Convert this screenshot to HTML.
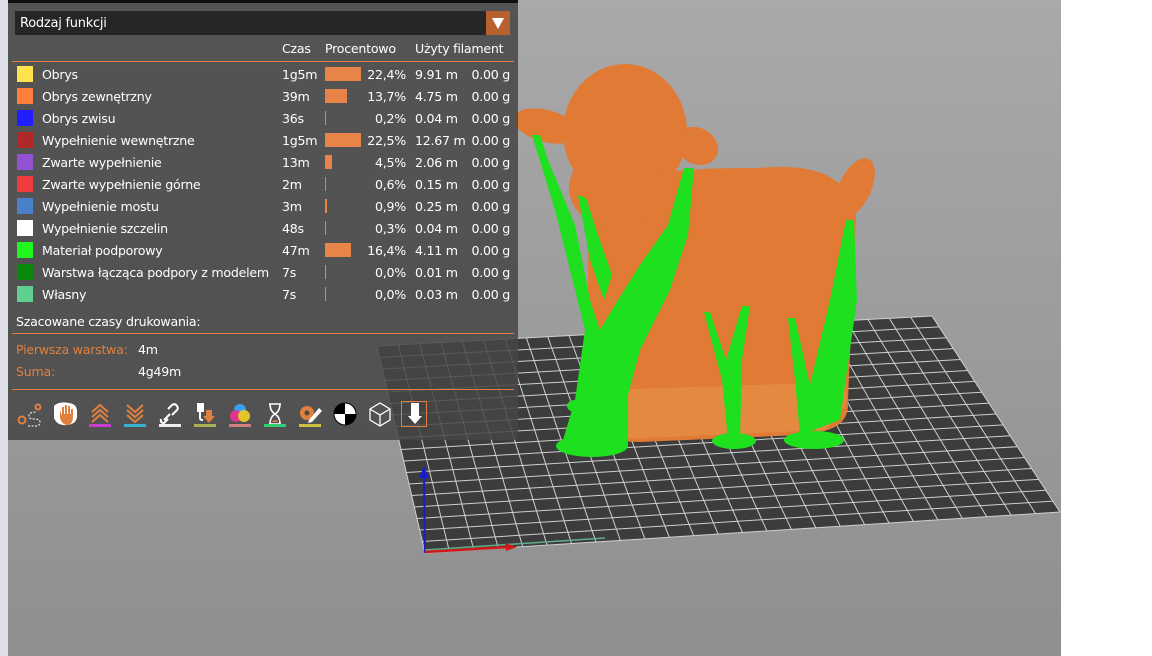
<!DOCTYPE html>
<html><head><meta charset="utf-8">
<style>
html,body{margin:0;padding:0}
body{width:1152px;height:656px;position:relative;overflow:hidden;background:#fff;font-family:"DejaVu Sans","Liberation Sans",sans-serif;}
#left{position:absolute;left:0;top:0;width:8px;height:656px;background:#dde0e6;}
#vp{position:absolute;left:8px;top:0;width:1053px;height:656px;background:linear-gradient(#a9a9a9,#8f8f8f);}
#scene{position:absolute;left:0;top:0;}
#panel{position:absolute;left:8px;top:0;width:510px;height:440px;background:rgba(70,70,70,0.86);color:#fff;font-size:12.6px;letter-spacing:-0.25px;}
#topbar{position:absolute;left:0;top:0;width:510px;height:3px;background:#111;}
.t{position:absolute;white-space:nowrap;line-height:15px;}
.sw{position:absolute;width:16px;height:16px;left:9px;}
.bar{position:absolute;height:14px;background:#e8844a;left:317px;}
.r{text-align:right;}
.hr{position:absolute;left:0;width:510px;height:1px;background:#e0803f;}
.or{color:#e0803f;}
.ic{position:absolute;top:400px;width:28px;height:28px;}
.ul{position:absolute;top:424px;width:22px;height:3px;}
</style></head><body>
<div id="left"></div>
<div id="vp"></div>
<svg id="scene" width="1152" height="656" viewBox="0 0 1152 656">
  <polygon points="377,346 932,316 1060,512 425,553" fill="#3c3c3c"/>
  <g id="grid" stroke="#cfcfcf" stroke-width="1"></g>
  <line x1="424" y1="470" x2="425" y2="553" stroke="#1a1ad0" stroke-width="2"/>
  <polygon points="419,478 424,466 429,478" fill="#1a1ad0"/>
  <line x1="425" y1="550" x2="605" y2="538" stroke="#5fb08a" stroke-width="1.5"/>
  <line x1="425" y1="552" x2="510" y2="547" stroke="#d01a1a" stroke-width="2.5"/>
  <polygon points="505,543 517,547 506,551" fill="#d01a1a"/>
  <g fill="#e07a35">
    <path d="M588,205 C620,168 700,168 760,168 C820,162 850,180 856,215 L848,400 C850,425 832,432 800,435 L640,442 L590,440 L588,330 Z"/>
    <ellipse cx="855" cy="188" rx="16" ry="32" transform="rotate(25 855 188)"/>
    <ellipse cx="625" cy="132" rx="62" ry="68"/>
    <ellipse cx="615" cy="188" rx="46" ry="40"/>
    <ellipse cx="546" cy="126" rx="33" ry="16" transform="rotate(15 546 126)"/>
    <ellipse cx="697" cy="146" rx="22" ry="18" transform="rotate(30 697 146)"/>
  </g>
  <path d="M600,390 L845,382 L846,405 L825,430 L600,440 Z" fill="#e69248" opacity="0.6"/>
  <g fill="#1ee01e">
    <path d="M532,135 L540,135 L548,160 L575,225 L590,300 L600,330 L618,300 L640,265 L668,225 L684,168 L694,168 L688,235 L670,290 L640,350 L628,395 L628,445 L560,450 L575,400 L585,330 L570,270 L555,210 Z"/>
    <path d="M578,195 L586,198 L598,235 L612,275 L604,300 L590,260 Z"/>
    <ellipse cx="592" cy="446" rx="36" ry="11"/>
    <path d="M704,312 L710,312 L726,360 L742,306 L750,306 L742,360 L740,440 L728,440 L722,380 Z"/>
    <ellipse cx="734" cy="441" rx="22" ry="8"/>
    <path d="M788,318 L795,318 L810,385 L830,300 L846,220 L854,220 L857,300 L840,420 L800,435 L795,380 Z"/>
    <ellipse cx="814" cy="440" rx="30" ry="9"/>
    <ellipse cx="575" cy="406" rx="8" ry="6"/>
  </g>
</svg>
<script>
(function(){
 var A=[377,346],B=[932,316],C=[1060,512],D=[425,553];
 var g=document.getElementById('grid'),s='';
 function L(p,q,t){return [p[0]+(q[0]-p[0])*t,p[1]+(q[1]-p[1])*t];}
 var N=26,M=18;
 for(var i=0;i<=N;i++){var t=i/N,p=L(A,B,t),q=L(D,C,t);s+='<line x1="'+p[0]+'" y1="'+p[1]+'" x2="'+q[0]+'" y2="'+q[1]+'"/>';}
 for(var j=0;j<=M;j++){var u=j/M,p=L(A,D,u),q=L(B,C,u);s+='<line x1="'+p[0]+'" y1="'+p[1]+'" x2="'+q[0]+'" y2="'+q[1]+'"/>';}
 g.innerHTML=s;
})();
</script>
<div id="panel">
 <div id="topbar"></div>
 <div style="position:absolute;left:7px;top:11px;width:495px;height:24px;background:#262626;"></div>
 <div class="t" style="left:12px;top:16px;font-size:13px;">Rodzaj funkcji</div>
 <div style="position:absolute;left:478px;top:11px;width:24px;height:24px;background:#b8612f;"></div>
 <svg style="position:absolute;left:482px;top:15px" width="16" height="16"><polygon points="2,3 14,3 8,14" fill="#fff"/></svg>
 <div class="t" style="left:274px;top:41px;">Czas</div>
 <div class="t" style="left:317px;top:41px;">Procentowo</div>
 <div class="t" style="left:407px;top:41px;">Użyty filament</div>
 <div class="hr" style="top:61px;left:4px;width:502px"></div>

 <div class="sw" style="top:66px;background:#ffe24a"></div><div class="t" style="left:34px;top:67px">Obrys</div><div class="t" style="left:274px;top:67px">1g5m</div><div class="bar" style="top:67px;width:36px"></div><div class="t r" style="left:340px;width:58px;top:67px">22,4%</div><div class="t" style="left:407px;top:67px">9.91 m</div><div class="t r" style="left:440px;width:62px;top:67px">0.00 g</div>
 <div class="sw" style="top:88px;background:#ff7f3b"></div><div class="t" style="left:34px;top:89px">Obrys zewnętrzny</div><div class="t" style="left:274px;top:89px">39m</div><div class="bar" style="top:89px;width:22px"></div><div class="t r" style="left:340px;width:58px;top:89px">13,7%</div><div class="t" style="left:407px;top:89px">4.75 m</div><div class="t r" style="left:440px;width:62px;top:89px">0.00 g</div>
 <div class="sw" style="top:110px;background:#1f1fff"></div><div class="t" style="left:34px;top:111px">Obrys zwisu</div><div class="t" style="left:274px;top:111px">36s</div><div class="bar" style="top:111px;width:1px"></div><div class="t r" style="left:340px;width:58px;top:111px">0,2%</div><div class="t" style="left:407px;top:111px">0.04 m</div><div class="t r" style="left:440px;width:62px;top:111px">0.00 g</div>
 <div class="sw" style="top:132px;background:#b0282a"></div><div class="t" style="left:34px;top:133px">Wypełnienie wewnętrzne</div><div class="t" style="left:274px;top:133px">1g5m</div><div class="bar" style="top:133px;width:36px"></div><div class="t r" style="left:340px;width:58px;top:133px">22,5%</div><div class="t" style="left:407px;top:133px">12.67 m</div><div class="t r" style="left:440px;width:62px;top:133px">0.00 g</div>
 <div class="sw" style="top:154px;background:#9551d4"></div><div class="t" style="left:34px;top:155px">Zwarte wypełnienie</div><div class="t" style="left:274px;top:155px">13m</div><div class="bar" style="top:155px;width:7px"></div><div class="t r" style="left:340px;width:58px;top:155px">4,5%</div><div class="t" style="left:407px;top:155px">2.06 m</div><div class="t r" style="left:440px;width:62px;top:155px">0.00 g</div>
 <div class="sw" style="top:176px;background:#f03c3c"></div><div class="t" style="left:34px;top:177px">Zwarte wypełnienie górne</div><div class="t" style="left:274px;top:177px">2m</div><div class="bar" style="top:177px;width:1px"></div><div class="t r" style="left:340px;width:58px;top:177px">0,6%</div><div class="t" style="left:407px;top:177px">0.15 m</div><div class="t r" style="left:440px;width:62px;top:177px">0.00 g</div>
 <div class="sw" style="top:198px;background:#4a80c8"></div><div class="t" style="left:34px;top:199px">Wypełnienie mostu</div><div class="t" style="left:274px;top:199px">3m</div><div class="bar" style="top:199px;width:2px"></div><div class="t r" style="left:340px;width:58px;top:199px">0,9%</div><div class="t" style="left:407px;top:199px">0.25 m</div><div class="t r" style="left:440px;width:62px;top:199px">0.00 g</div>
 <div class="sw" style="top:220px;background:#ffffff"></div><div class="t" style="left:34px;top:221px">Wypełnienie szczelin</div><div class="t" style="left:274px;top:221px">48s</div><div class="bar" style="top:221px;width:1px"></div><div class="t r" style="left:340px;width:58px;top:221px">0,3%</div><div class="t" style="left:407px;top:221px">0.04 m</div><div class="t r" style="left:440px;width:62px;top:221px">0.00 g</div>
 <div class="sw" style="top:242px;background:#1ef81e"></div><div class="t" style="left:34px;top:243px">Materiał podporowy</div><div class="t" style="left:274px;top:243px">47m</div><div class="bar" style="top:243px;width:26px"></div><div class="t r" style="left:340px;width:58px;top:243px">16,4%</div><div class="t" style="left:407px;top:243px">4.11 m</div><div class="t r" style="left:440px;width:62px;top:243px">0.00 g</div>
 <div class="sw" style="top:264px;background:#0a8a0a"></div><div class="t" style="left:34px;top:265px">Warstwa łącząca podpory z modelem</div><div class="t" style="left:274px;top:265px">7s</div><div class="bar" style="top:265px;width:1px"></div><div class="t r" style="left:340px;width:58px;top:265px">0,0%</div><div class="t" style="left:407px;top:265px">0.01 m</div><div class="t r" style="left:440px;width:62px;top:265px">0.00 g</div>
 <div class="sw" style="top:286px;background:#5ecf8f"></div><div class="t" style="left:34px;top:287px">Własny</div><div class="t" style="left:274px;top:287px">7s</div><div class="bar" style="top:287px;width:1px"></div><div class="t r" style="left:340px;width:58px;top:287px">0,0%</div><div class="t" style="left:407px;top:287px">0.03 m</div><div class="t r" style="left:440px;width:62px;top:287px">0.00 g</div>

 <div class="t" style="left:8px;top:314px">Szacowane czasy drukowania:</div>
 <div class="hr" style="top:333px;left:4px;width:502px"></div>
 <div class="t or" style="left:8px;top:342px">Pierwsza warstwa:</div><div class="t" style="left:130px;top:342px">4m</div>
 <div class="t or" style="left:8px;top:364px">Suma:</div><div class="t" style="left:130px;top:364px">4g49m</div>
 <div class="hr" style="top:389px;left:4px;width:502px"></div>

 <svg class="ic" style="left:8px" viewBox="0 0 28 28"><circle cx="6" cy="20" r="3.5" fill="none" stroke="#e0803f" stroke-width="2"/><circle cx="22" cy="7" r="2.5" fill="none" stroke="#e0803f" stroke-width="2"/><path d="M12,26 H20 Q24,26 24,22 Q24,19 18,19 Q12,19 13,15 Q14,12 20,12" fill="none" stroke="#ddd" stroke-width="1.3" stroke-dasharray="2,1.5"/></svg>
 <svg class="ic" style="left:43px" viewBox="0 0 28 28"><path d="M3,6 Q8,1 18,3 Q27,4 26,14 Q27,24 16,25 Q6,26 3,18 Z" fill="#fff"/><path d="M9,10 V18 Q11,25 17,25 Q22,24 22,16 V9 H20 V14 H19 V6 H17 V14 H16 V5 H14 V14 H13 V7 H11 V16 Z" fill="#e0803f"/></svg>
 <svg class="ic" style="left:78px" viewBox="0 0 28 28"><path d="M6,12 L14,5 L22,12 M6,17 L14,10 L22,17 M6,22 L14,15 L22,22" fill="none" stroke="#e0803f" stroke-width="2"/></svg>
 <div class="ul" style="left:81px;background:#c83cd0"></div>
 <svg class="ic" style="left:113px" viewBox="0 0 28 28"><path d="M6,5 L14,12 L22,5 M6,10 L14,17 L22,10 M6,15 L14,22 L22,15" fill="none" stroke="#e0803f" stroke-width="2"/></svg>
 <div class="ul" style="left:116px;background:#3ab0d0"></div>
 <svg class="ic" style="left:148px" viewBox="0 0 28 28"><path d="M8,20 L14,14 M12,9 L16,5 Q19,3 21,6 Q23,9 20,11 L16,15 M5,19 Q4,23 8,23 L12,19" fill="none" stroke="#fff" stroke-width="2"/></svg>
 <div class="ul" style="left:151px;background:#eee"></div>
 <svg class="ic" style="left:183px" viewBox="0 0 28 28"><rect x="6" y="3" width="7" height="9" fill="#fff"/><path d="M9,12 V18 Q9,20 12,20" fill="none" stroke="#fff" stroke-width="2"/><path d="M15,10 H21 V16 H24 L18,23 L12,16 H15 Z" fill="#e0803f"/></svg>
 <div class="ul" style="left:186px;background:#a8b050"></div>
 <svg class="ic" style="left:218px" viewBox="0 0 28 28"><circle cx="14" cy="10" r="6" fill="#3aa0f0"/><circle cx="10" cy="16" r="6" fill="#f03090" opacity="0.9"/><circle cx="18" cy="16" r="6" fill="#f0d020" opacity="0.9"/></svg>
 <div class="ul" style="left:221px;background:#d08080"></div>
 <svg class="ic" style="left:253px" viewBox="0 0 28 28"><path d="M8,4 H20 M8,24 H20 M9,4 Q9,11 14,14 Q19,11 19,4 M9,24 Q9,17 14,14 Q19,17 19,24" fill="none" stroke="#fff" stroke-width="1.6"/><path d="M11,22 Q14,18 17,22 Z" fill="#e0803f"/></svg>
 <div class="ul" style="left:256px;background:#30d070"></div>
 <svg class="ic" style="left:288px" viewBox="0 0 28 28"><circle cx="11" cy="13" r="7" fill="#e0803f"/><circle cx="11" cy="13" r="2.5" fill="#4a4a4a"/><path d="M13,20 L23,8 L26,11 L16,22 L12,23 Z" fill="#fff"/></svg>
 <div class="ul" style="left:291px;background:#d0c040"></div>
 <svg class="ic" style="left:323px" viewBox="0 0 28 28"><circle cx="14" cy="14" r="11" fill="#fff" stroke="#000" stroke-width="1"/><path d="M14,14 V3 A11,11 0 0 0 3,14 Z M14,14 V25 A11,11 0 0 0 25,14 Z" fill="#000"/></svg>
 <svg class="ic" style="left:358px" viewBox="0 0 28 28"><path d="M14,3 L24,9 V20 L14,26 L4,20 V9 Z M4,9 L14,15 L24,9 M14,15 V26" fill="none" stroke="#fff" stroke-width="1.3"/></svg>
 <div style="position:absolute;left:393px;top:401px;width:26px;height:26px;border:1px solid #e0803f;box-sizing:border-box"></div>
 <svg class="ic" style="left:393px" viewBox="0 0 28 28"><path d="M10,3 H18 V16 H21 L14,24 L7,16 H10 Z" fill="#fff"/></svg>
</div>
</body></html>
